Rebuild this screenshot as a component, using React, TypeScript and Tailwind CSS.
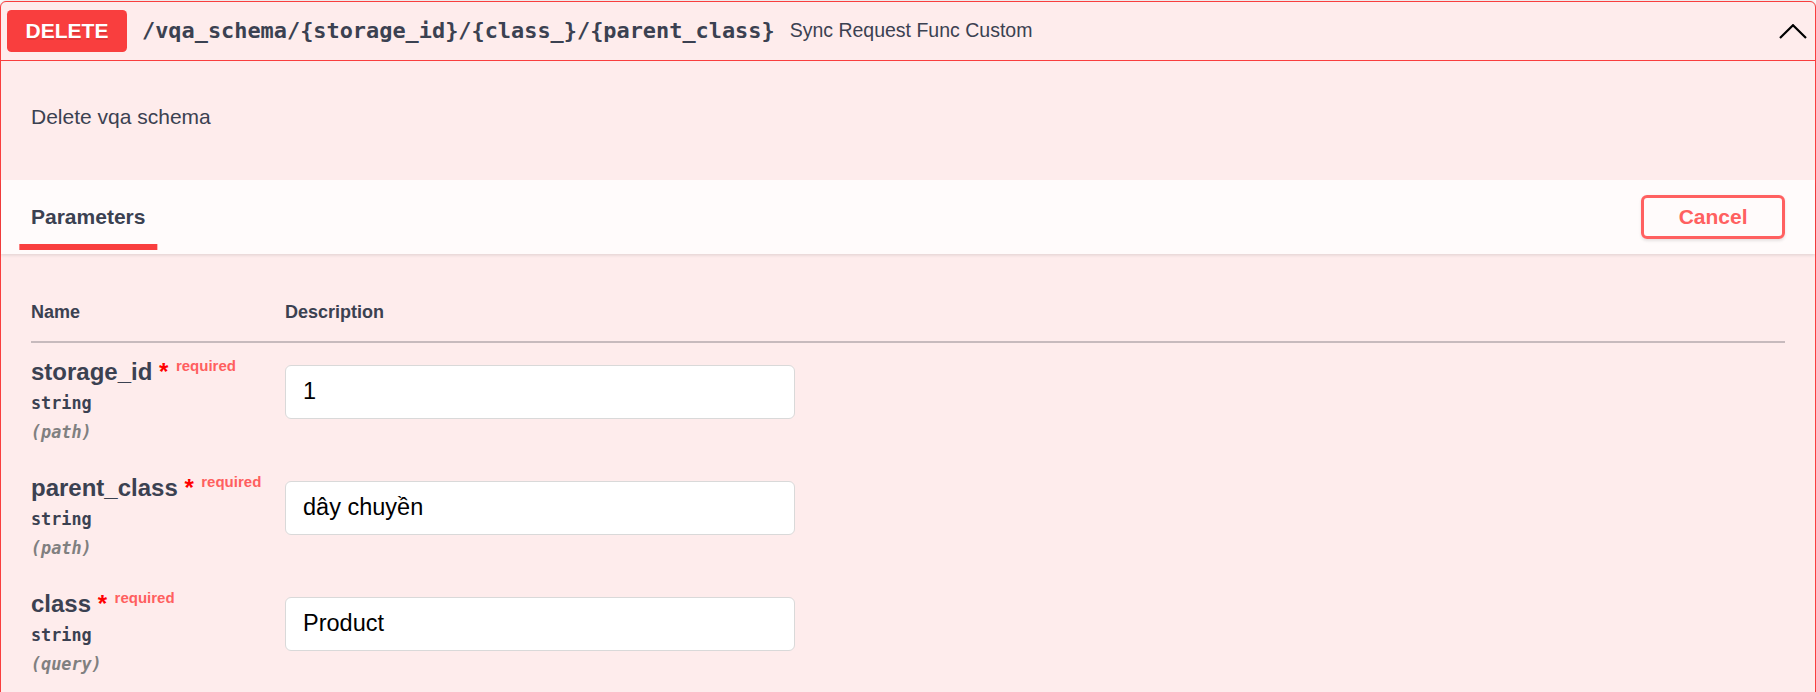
import React from "react";

const params = [
  { name: "storage_id", type: "string", loc: "(path)", value: "1" },
  { name: "parent_class", type: "string", loc: "(path)", value: "dây chuyền" },
  { name: "class", type: "string", loc: "(query)", value: "Product" },
];

export default function App() {
  return (
    <div className="min-h-[692px] bg-white pt-px font-['Liberation_Sans',Arial,sans-serif]">
      <div className="rounded-[6px] border border-[#f93e3e] bg-[#feecec] shadow-[0_0_4.5px_rgba(0,0,0,0.19)]">
        {/* Summary header */}
        <div className="flex h-[59px] items-center border-b border-[#f93e3e] pl-[6px] pr-2">
          <span className="flex h-[42px] w-[120px] shrink-0 items-center justify-center rounded-[4.5px] bg-[#f93e3e] text-[21px] font-bold text-white [text-shadow:0_1.5px_0_rgba(0,0,0,0.1)]">
            DELETE
          </span>
          <span className="px-[15px] font-['DejaVu_Sans_Mono',monospace] text-[21.9px] font-bold text-[#3b4151]">
            /vqa_schema/{"{storage_id}"}/{"{class_}"}/{"{parent_class}"}
          </span>
          <span className="flex-1 text-[19.5px] text-[#3b4151]">Sync Request Func Custom</span>
          <svg width="28" height="15" viewBox="0 0 28 15" className="shrink-0">
            <polyline points="1,14 14,1.2 27,14" fill="none" stroke="#000" strokeWidth="2.2" />
          </svg>
        </div>

        {/* Description */}
        <div className="px-[30px] pt-[40px] pb-[47px]">
          <p className="text-[21px] leading-[31.5px] text-[#3b4151]">Delete vqa schema</p>
        </div>

        {/* Section header */}
        <div className="relative flex h-[74px] items-center justify-between bg-[#fffbfb] px-[30px] shadow-[0_1.5px_3px_rgba(0,0,0,0.1)]">
          <h4 className="text-[21px] font-bold leading-[24px] text-[#3b4151]">
            <span className="relative">
              Parameters
              <span className="absolute bottom-[-22.5px] left-1/2 h-[6px] w-[120%] -translate-x-1/2 bg-[#f93e3e]" />
            </span>
          </h4>
          <button className="h-[44px] rounded-[6px] border-[3px] border-[#ff6060] bg-transparent px-[34.5px] text-[21px] font-bold text-[#ff6060] shadow-[0_1.5px_3px_rgba(0,0,0,0.1)]">
            Cancel
          </button>
        </div>

        {/* Parameters table */}
        <div className="p-[30px]">
          <div className="flex border-b-2 border-[#c7babd] py-[18px] text-[18px] font-bold leading-[21px] text-[#3b4151]">
            <div className="w-[254px] shrink-0">Name</div>
            <div>Description</div>
          </div>
          {params.map((p) => (
            <div key={p.name} className="flex py-[15px]">
              <div className="w-[254px] shrink-0">
                <div className="text-[24px] font-bold leading-[28px] text-[#3b4151]">
                  {p.name}
                  <span className="text-[#ff0000]">{"\u00a0*"}</span>
                  <span className="relative top-[-9px] px-[7.5px] text-[15px] leading-none text-[#ff5f5f]">required</span>
                </div>
                <div className="py-[7px] font-['DejaVu_Sans_Mono',monospace] text-[16.8px] font-bold leading-[21px] text-[#3b4151]">
                  {p.type}
                </div>
                <div className="font-['DejaVu_Sans_Mono',monospace] text-[16.8px] font-bold italic leading-[23px] text-[#808080]">
                  {p.loc}
                </div>
              </div>
              <div className="flex-1">
                <input
                  type="text"
                  defaultValue={p.value}
                  readOnly
                  className="mt-[7px] h-[54px] w-[510px] rounded-[6px] border border-[#d9d9d9] bg-white pl-[17px] pr-[15px] font-['Liberation_Sans',Arial,sans-serif] text-[23.5px] text-black outline-none"
                />
              </div>
            </div>
          ))}
        </div>
      </div>
    </div>
  );
}
